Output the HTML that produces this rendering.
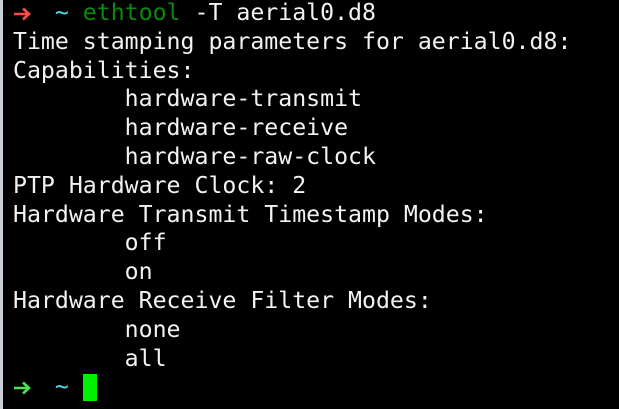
<!DOCTYPE html>
<html><head><style>
html,body{margin:0;padding:0;background:#000;width:619px;height:409px;overflow:hidden}
#b{position:absolute;left:0;top:0;width:3px;height:409px;background:#c8ccd4}
pre{position:absolute;left:13px;top:-1px;margin:0;font-family:"DejaVu Sans Mono","Liberation Mono",monospace;font-size:23.2px;line-height:28.8px;color:#f2f2f2}
.c{color:#4fe0f0}.g{color:#0a8a0a}
.ar{display:inline-block;width:13.95px;height:28px;vertical-align:top;position:relative}
.ar svg{position:absolute;left:0;top:8px}
.cur{display:inline-block;width:14px;height:27px;background:#00f000;vertical-align:top;margin-top:1px}
</style></head><body><div id="b"></div>
<pre><span class="ar"><svg width="18" height="14" viewBox="0 0 18 14"><path d="M1 7H16M10 1.5L16 7L10 12.5" fill="none" stroke="#ff4a4a" stroke-width="2.6"/></svg></span>  <span class="c">~</span> <span class="g">ethtool</span> -T aerial0.d8
Time stamping parameters for aerial0.d8:
Capabilities:
        hardware-transmit
        hardware-receive
        hardware-raw-clock
PTP Hardware Clock: 2
Hardware Transmit Timestamp Modes:
        off
        on
Hardware Receive Filter Modes:
        none
        all
<span class="ar"><svg width="18" height="14" viewBox="0 0 18 14"><path d="M1 7H16M10 1.5L16 7L10 12.5" fill="none" stroke="#50e050" stroke-width="2.6"/></svg></span>  <span class="c">~</span> <span class="cur"></span></pre>
</body></html>
